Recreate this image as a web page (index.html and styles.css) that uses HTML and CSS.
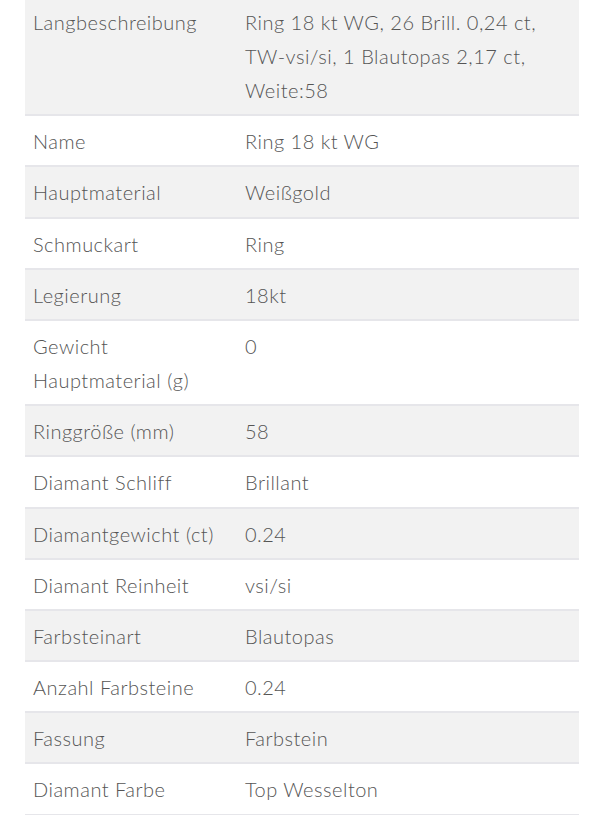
FILE: index.html
```html
<!DOCTYPE html>
<html lang="de">
<head>
<meta charset="utf-8">
<link rel="stylesheet" href="styles.css">
</head>
<body>
<table class="specs">
<tbody>
<tr><th>Langbeschreibung</th><td>Ring 18 kt WG, 26 Brill. 0,24 ct, TW-vsi/si, 1 Blautopas 2,17 ct, Weite:58</td></tr>
<tr><th>Name</th><td>Ring 18 kt WG</td></tr>
<tr><th>Hauptmaterial</th><td>Weißgold</td></tr>
<tr><th>Schmuckart</th><td>Ring</td></tr>
<tr><th>Legierung</th><td>18kt</td></tr>
<tr><th>Gewicht Hauptmaterial (g)</th><td>0</td></tr>
<tr><th>Ringgröße (mm)</th><td>58</td></tr>
<tr><th>Diamant Schliff</th><td>Brillant</td></tr>
<tr><th>Diamantgewicht (ct)</th><td>0.24</td></tr>
<tr><th>Diamant Reinheit</th><td>vsi/si</td></tr>
<tr><th>Farbsteinart</th><td>Blautopas</td></tr>
<tr><th>Anzahl Farbsteine</th><td>0.24</td></tr>
<tr><th>Fassung</th><td>Farbstein</td></tr>
<tr><th>Diamant Farbe</th><td>Top Wesselton</td></tr>
</tbody>
</table>
</body>
</html>
```
FILE: styles.css
```css
html, body {
  margin: 0;
  padding: 0;
  background: #ffffff;
}
body {
  padding: 0 21px 0 25px;
  font-family: Lato, "Liberation Sans", sans-serif;
  font-weight: 300;
  color: #555555;
}
.specs {
  width: 554px;
  table-layout: fixed;
  border-collapse: collapse;
  margin-top: -3px;
  font-size: 20px;
  line-height: 34px;
  letter-spacing: 0.5px;
}
.specs tr {
  border-bottom: 2px solid #e6e6ea;
}
.specs tr:nth-child(odd) {
  background: #f2f2f2;
}
.specs th,
.specs td {
  text-align: left;
  vertical-align: top;
  font-weight: 300;
  padding: 8px 8px 7.2px 8px;
}
.specs th {
  width: 200px;
  padding-right: 4px;
}
```
